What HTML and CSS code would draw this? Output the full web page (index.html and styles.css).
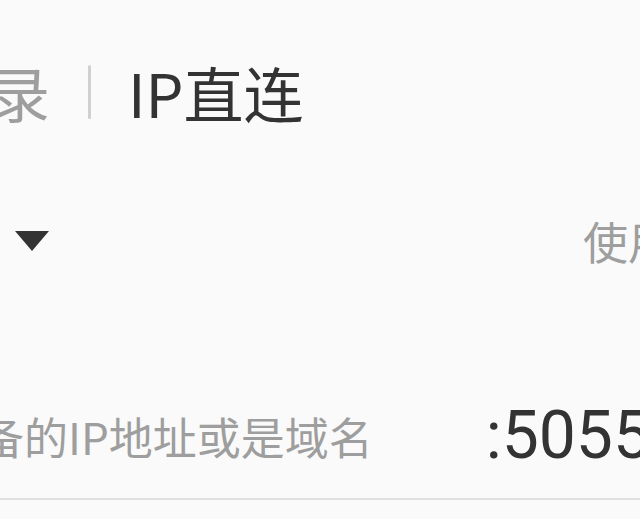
FILE: index.html
```html
<!DOCTYPE html>
<html lang="zh-CN">
<head>
<meta charset="utf-8">
<title>IP直连</title>
<link rel="stylesheet" href="styles.css">
</head>
<body>
<div class="screen">
  <div class="tabs">
    <span class="tab">录</span>
    <span class="sep"></span>
    <span class="tab active">IP直连</span>
  </div>
  <div class="select-row">
    <span class="caret"></span>
    <span class="select-label">使用</span>
  </div>
  <div class="input-row">
    <span class="hint">备的IP地址或是域名</span>
    <span class="port">:5055</span>
  </div>
</div>
</body>
</html>
```
FILE: styles.css
```css
html, body {
  margin: 0;
  padding: 0;
  background: #fafafa;
  overflow: hidden;
}
.screen {
  width: 640px;
  height: 519px;
  overflow: hidden;
  font-family: "Noto Sans CJK SC", "Noto Sans", sans-serif;
}
.tabs {
  display: flex;
  align-items: center;
  padding-top: 60px;
  height: 63px;
}
.tab {
  font-size: 60px;
  line-height: 63px;
  color: #9e9e9e;
  white-space: nowrap;
}
.tab:first-child {
  margin-left: -10px;
}
.tab.active {
  color: #333333;
}
.sep {
  width: 3px;
  height: 54px;
  border-radius: 2px;
  background: #d0d0d0;
  margin: 0 37px 0 38px;
}
.select-row {
  display: flex;
  align-items: center;
  justify-content: space-between;
  margin-top: 90px;
  height: 56px;
  padding-left: 15px;
}
.caret {
  width: 0;
  height: 0;
  border-left: 17px solid transparent;
  border-right: 17px solid transparent;
  border-top: 20px solid #333333;
}
.select-label {
  font-size: 45px;
  line-height: 56px;
  color: #9e9e9e;
  margin-right: -33px;
  white-space: nowrap;
}
.input-row {
  display: flex;
  align-items: center;
  justify-content: space-between;
  margin-top: 130px;
  height: 74px;
  border-bottom: 2px solid #e0e0e0;
  padding-bottom: 25px;
}
.hint {
  font-size: 44px;
  line-height: 60px;
  color: #9e9e9e;
  margin-left: -20px;
  white-space: nowrap;
}
.port {
  font-family: Roboto, "Noto Sans", sans-serif;
  font-size: 66px;
  line-height: 74px;
  color: #333333;
  margin-right: -10px;
  white-space: nowrap;
}
```
